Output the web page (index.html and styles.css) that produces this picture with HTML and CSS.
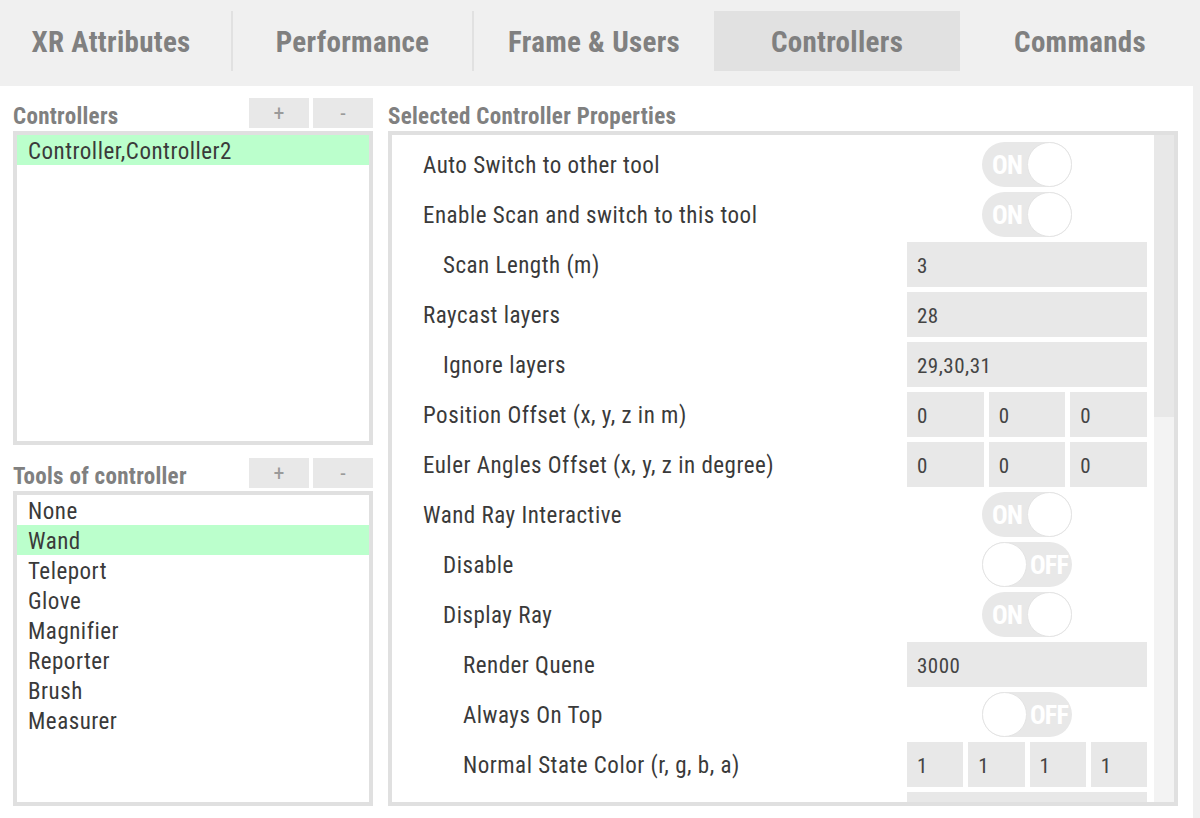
FILE: index.html
```html
<!DOCTYPE html>
<html>
<head>
<meta charset="utf-8">
<link rel="stylesheet" href="styles.css">
</head>
<body>
<div class="tabs">
  <div class="tab tab-first">XR Attributes</div>
  <div class="tab-sep"></div>
  <div class="tab tab-w239">Performance</div>
  <div class="tab-sep"></div>
  <div class="tab tab-w240">Frame &amp; Users</div>
  <div class="tab tab-active">Controllers</div>
  <div class="tab tab-w240">Commands</div>
</div>
<div class="main">
  <div class="left">
    <div class="sect">
      <div class="head"><span class="title">Controllers</span><span class="btn">+</span><span class="btn">-</span></div>
      <div class="list list-a">
        <div class="item sel">Controller,Controller2</div>
      </div>
    </div>
    <div class="sect sect-b">
      <div class="head"><span class="title">Tools of controller</span><span class="btn">+</span><span class="btn">-</span></div>
      <div class="list list-b">
        <div class="item">None</div>
        <div class="item sel">Wand</div>
        <div class="item">Teleport</div>
        <div class="item">Glove</div>
        <div class="item">Magnifier</div>
        <div class="item">Reporter</div>
        <div class="item">Brush</div>
        <div class="item">Measurer</div>
      </div>
    </div>
  </div>
  <div class="right">
    <div class="head"><span class="title">Selected Controller Properties</span></div>
    <div class="panel">
      <div class="rows">
        <div class="row"><span class="label">Auto Switch to other tool</span><div class="val"><div class="toggle on"><span class="tg-text">ON</span><span class="knob"></span></div></div></div>
        <div class="row"><span class="label">Enable Scan and switch to this tool</span><div class="val"><div class="toggle on"><span class="tg-text">ON</span><span class="knob"></span></div></div></div>
        <div class="row"><span class="label l1">Scan Length (m)</span><div class="val"><div class="inp">3</div></div></div>
        <div class="row"><span class="label">Raycast layers</span><div class="val"><div class="inp">28</div></div></div>
        <div class="row"><span class="label l1">Ignore layers</span><div class="val"><div class="inp">29,30,31</div></div></div>
        <div class="row"><span class="label">Position Offset (x, y, z in m)</span><div class="val"><div class="inp">0</div><div class="inp">0</div><div class="inp">0</div></div></div>
        <div class="row"><span class="label">Euler Angles Offset (x, y, z in degree)</span><div class="val"><div class="inp">0</div><div class="inp">0</div><div class="inp">0</div></div></div>
        <div class="row"><span class="label">Wand Ray Interactive</span><div class="val"><div class="toggle on"><span class="tg-text">ON</span><span class="knob"></span></div></div></div>
        <div class="row"><span class="label l1">Disable</span><div class="val"><div class="toggle off"><span class="knob"></span><span class="tg-text">OFF</span></div></div></div>
        <div class="row"><span class="label l1">Display Ray</span><div class="val"><div class="toggle on"><span class="tg-text">ON</span><span class="knob"></span></div></div></div>
        <div class="row"><span class="label l2">Render Quene</span><div class="val"><div class="inp">3000</div></div></div>
        <div class="row"><span class="label l2">Always On Top</span><div class="val"><div class="toggle off"><span class="knob"></span><span class="tg-text">OFF</span></div></div></div>
        <div class="row"><span class="label l2">Normal State Color (r, g, b, a)</span><div class="val"><div class="inp">1</div><div class="inp">1</div><div class="inp">1</div><div class="inp">1</div></div></div>
        <div class="row"><span class="label l2"></span><div class="val"><div class="inp"></div></div></div>
      </div>
      <div class="scrollbar"><div class="thumb"></div></div>
    </div>
  </div>
</div>
</body>
</html>
```

FILE: styles.css
```css
* { box-sizing: border-box; }
html, body { margin: 0; padding: 0; }
body {
  width: 1200px;
  height: 818px;
  overflow: hidden;
  background: #f0f0f0;
  font-family: "Roboto Condensed", "Liberation Sans Narrow", "DejaVu Sans Condensed", Roboto, sans-serif;
  font-stretch: condensed;
  color: #3a3a3a;
}

/* Tabs */
.tabs {
  display: flex;
  height: 86px;
  padding-top: 11px;
  align-items: flex-start;
}
.tab {
  height: 60px;
  display: flex;
  align-items: center;
  justify-content: center;
  padding-top: 2px;
  font-size: 29px;
  font-weight: bold;
  letter-spacing: 0.3px;
  color: #808080;
}
.tab-first { width: 231px; padding-right: 9px; }
.tab-w239 { width: 239px; }
.tab-w240 { width: 240px; }
.tab-active { width: 246px; background: #e1e1e1; }
.tab-sep { width: 2px; height: 60px; background: #e1e1e1; }

/* Main area */
.main {
  width: 1193px;
  height: 732px;
  background: #fff;
  display: flex;
  gap: 15px;
  padding: 12px 0 0 13px;
}
.left { width: 360px; display: flex; flex-direction: column; }
.sect-b { margin-top: 13px; }
.head {
  height: 30px;
  margin-bottom: 3px;
  display: flex;
  gap: 4px;
  align-items: stretch;
}
.title {
  flex: 1;
  font-size: 23px;
  font-weight: bold;
  color: #808080;
  padding-top: 6px;
  line-height: 26px;
  letter-spacing: 0.3px;
  white-space: nowrap;
}
.btn {
  width: 60px;
  background: #e8e8e8;
  color: #9a9a9a;
  font-size: 22px;
  display: flex;
  align-items: center;
  justify-content: center;
}
.list {
  border: 4px solid #e0e0e0;
  background: #fff;
}
.list-a { height: 314px; }
.list-b { height: 315px; }
.item {
  height: 30px;
  line-height: 31px;
  padding-top: 1px;
  padding-left: 11px;
  font-size: 23px;
  letter-spacing: 0.5px;
  color: #3a3a3a;
}
.item.sel { background: #bbffcc; }

/* Right panel */
.right { width: 790px; display: flex; flex-direction: column; }
.panel {
  height: 675px;
  border: 4px solid #e0e0e0;
  display: flex;
  overflow: hidden;
}
.rows {
  flex: 1;
  padding: 7px 7px 0 0;
  display: flex;
  flex-direction: column;
  gap: 5px;
}
.row {
  height: 45px;
  flex: none;
  display: flex;
  align-items: center;
}
.label {
  flex: 1;
  padding-left: 31px;
  padding-top: 2px;
  font-size: 23px;
  letter-spacing: 0.5px;
  color: #3a3a3a;
  white-space: nowrap;
}
.label.l1 { padding-left: 51px; }
.label.l2 { padding-left: 71px; }
.val {
  width: 240px;
  height: 45px;
  display: flex;
  gap: 5px;
  justify-content: center;
}
.inp {
  flex: 1;
  background: #e8e8e8;
  font-size: 21px;
  letter-spacing: 0.5px;
  color: #444;
  padding-left: 10px;
  padding-top: 2px;
  line-height: 45px;
}
.toggle {
  width: 90px;
  height: 45px;
  border-radius: 23px;
  background: #e8e8e8;
  display: flex;
  align-items: center;
}
.toggle.on { padding-left: 10px; }
.toggle.on .tg-text { width: 35px; }
.toggle.off .tg-text { width: 44px; text-align: center; }
.tg-text {
  color: #fff;
  font-size: 26px;
  font-weight: bold;
  letter-spacing: -0.8px;
}
.knob {
  width: 45px;
  height: 45px;
  border-radius: 50%;
  background: #fff;
  border: 1px solid #e4e4e4;
}
.toggle.on .knob { margin-left: auto; }
.scrollbar {
  width: 20px;
  background: #f3f3f3;
}
.thumb {
  height: 282px;
  background: #e8e8e8;
}
```
